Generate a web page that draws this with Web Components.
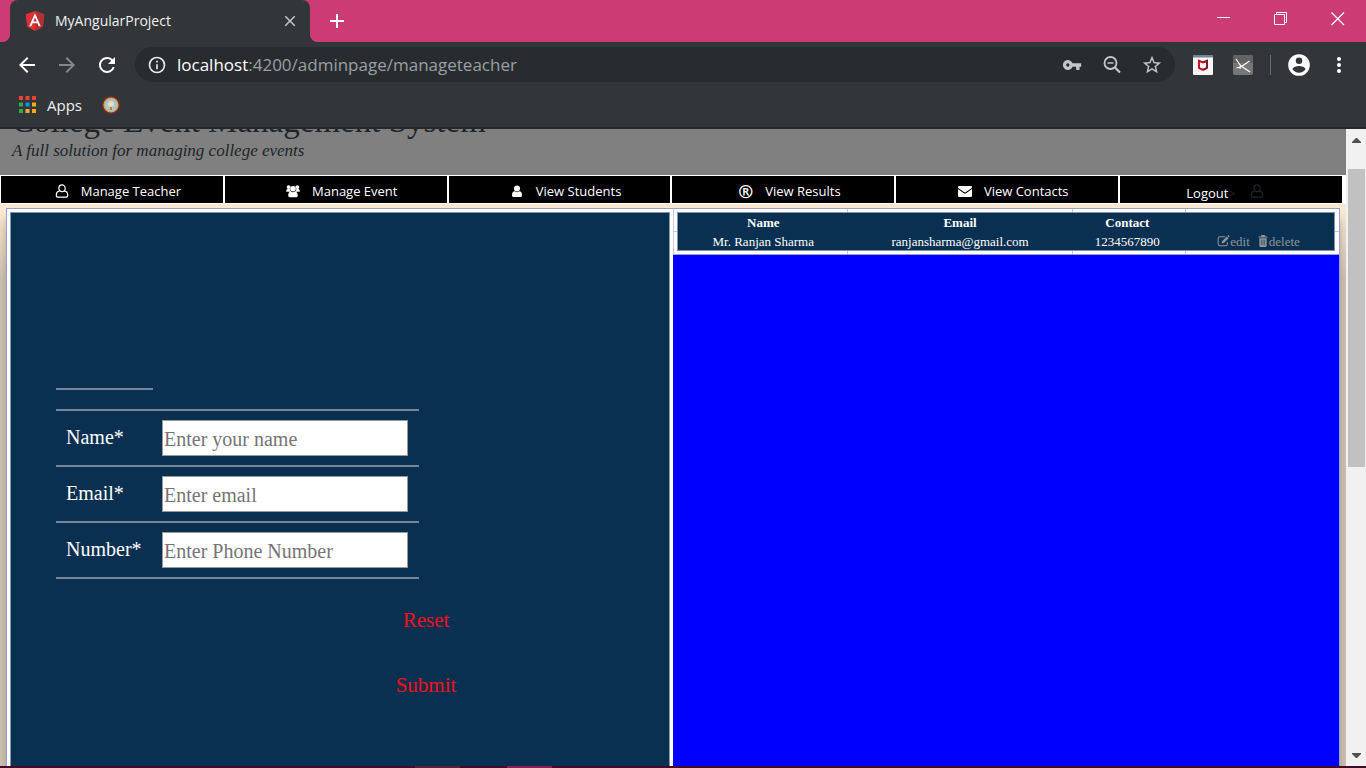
<!DOCTYPE html>
<html lang="en">
<head>
<meta charset="utf-8">
<title>MyAngularProject</title>
<style>
  html, body { height: 100%; margin: 0; }
  body { display: flex; flex-direction: column; overflow: hidden; font-family: "Open Sans", "Noto Sans", sans-serif; background: #323639; }
  main { flex: 1; min-height: 0; display: flex; }
</style>
</head>
<body>
<tab-strip>MyAngularProject</tab-strip>
<tool-bar><span slot="host">localhost</span><span slot="path">:4200/adminpage/manageteacher</span></tool-bar>
<bookmark-bar>Apps</bookmark-bar>
<main>
  <app-page>
    <site-header><span slot="title">College Event Management System</span><span slot="tagline">A full solution for managing college events</span></site-header>
    <site-nav>
      <nav-item icon="user-o">Manage Teacher</nav-item>
      <nav-item icon="users">Manage Event</nav-item>
      <nav-item icon="user">View Students</nav-item>
      <nav-item><span slot="mark">®</span>View Results</nav-item>
      <nav-item icon="envelope">View Contacts</nav-item>
      <logout-item>Logout</logout-item>
    </site-nav>
    <split-panels>
      <teacher-form slot="left">
        <form-field placeholder="Enter your name">Name*</form-field>
        <form-field placeholder="Enter email" type="email">Email*</form-field>
        <form-field placeholder="Enter Phone Number" type="tel">Number*</form-field>
      </teacher-form>
      <teacher-table slot="right"></teacher-table>
    </split-panels>
  </app-page>
  <page-scrollbar></page-scrollbar>
</main>
<task-edge></task-edge>

<script>
const define = (name, html, setup) => {
  const template = document.createElement('template');
  template.innerHTML = html;
  customElements.define(name, class extends HTMLElement {
    constructor() {
      super();
      this.attachShadow({ mode: 'open' }).append(template.content.cloneNode(true));
    }
    connectedCallback() { if (setup) setup(this, this.shadowRoot); }
  });
};

const icons = {
  angular: ['31 30 188 200', '<path fill="#dd3135" d="M125 30 31.9 63.2l14.2 123.1L125 230l78.9-43.7 14.2-123.1z"/><path fill="#b52e31" d="M125 30v200l78.9-43.7 14.2-123.1z"/><path fill="#fff" d="M125 52.1 66.8 182.6h21.7l11.7-29.2h49.4l11.7 29.2H183zm17 83.3h-34l17-40.9z"/>'],
  close: ['0 0 24 24', '<path d="M19 6.4 17.6 5 12 10.6 6.4 5 5 6.4l5.6 5.6L5 17.6 6.4 19l5.6-5.6 5.6 5.6 1.4-1.4-5.6-5.6z"/>'],
  plus: ['0 0 16 16', '<path d="M7 1h2v6h6v2H9v6H7V9H1V7h6z"/>'],
  minimize: ['0 0 14 14', '<path d="M0 5h13v1H0z"/>'],
  restore: ['0 0 14 14', '<path fill="none" stroke="currentColor" d="M.5 2.5h10v10H.5zM2.5 2.5v-2h10v10h-2"/>'],
  quit: ['0 0 14 14', '<path fill="none" stroke="currentColor" stroke-width="1.2" d="m.5.5 12.5 12.5M13 .5.5 13"/>'],
  back: ['0 0 24 24', '<path d="M20 11H7.8l5.6-5.6L12 4l-8 8 8 8 1.4-1.4L7.8 13H20z"/>'],
  forward: ['0 0 24 24', '<path d="m12 4-1.4 1.4 5.6 5.6H4v2h12.2l-5.6 5.6L12 20l8-8z"/>'],
  reload: ['0 0 24 24', '<path d="M17.65 6.35A8 8 0 1 0 19.73 14h-2.08A6 6 0 1 1 12 6c1.66 0 3.14.69 4.22 1.78L13 11h7V4z"/>'],
  info: ['0 0 24 24', '<path d="M11 7h2v2h-2zm0 4h2v6h-2zm1-9a10 10 0 1 0 0 20 10 10 0 0 0 0-20zm0 18a8 8 0 1 1 0-16 8 8 0 0 1 0 16z"/>'],
  key: ['0 0 24 24', '<path d="M12.65 10a6 6 0 1 0 0 4H17v4h4v-4h2v-4zM7 14a2 2 0 1 1 0-4 2 2 0 0 1 0 4z"/>'],
  zoomout: ['0 0 22 22', '<circle cx="9.500" cy="9" r="6" fill="none" stroke="currentColor" stroke-width="1.800"/><path fill="none" stroke="currentColor" stroke-width="2.200" d="m14 13.500 5 5"/><path d="M6.500 8.200h6v1.500h-6z"/>'],
  star: ['0 0 24 24', '<path d="m22 9.24-7.19-.62L12 2 9.19 8.63 2 9.24l5.46 4.73L5.82 21 12 17.27 18.18 21l-1.63-7.03zM12 15.4l-3.76 2.27 1-4.28-3.32-2.88 4.38-.38L12 6.1l1.71 4.04 4.38.38-3.32 2.88 1 4.28z"/>'],
  shield: ['0 0 20 20', '<rect width="20" height="20" rx="1" fill="#f7f7f7"/><path fill="#6f8793" d="M0 0h20v2.500H0z"/><path fill="none" stroke="#c8102e" stroke-width="2" d="M10 7.500 6 5.800v7l4 2.200"/><path fill="none" stroke="#8c1020" stroke-width="2" d="m10 7.500 4-1.700v7L10 15"/>'],
  script: ['0 0 20 20', '<rect width="20" height="20" rx="2" fill="#777"/><path fill="#636363" d="M0 2a2 2 0 0 1 2-2h16a2 2 0 0 1 2 2v6H0z"/><path fill="none" stroke="#fff" stroke-width="1.200" d="m3 4 4.500 6.500L17 17M3.500 13l5-1.500 8-5.500M7.500 11l-.5 3"/>'],
  account: ['0 0 24 24', '<path d="M12 2a10 10 0 1 0 0 20 10 10 0 0 0 0-20zm0 3a3 3 0 1 1 0 6 3 3 0 0 1 0-6zm0 14.200A7.200 7.200 0 0 1 6 16c0-2 4-3.100 6-3.100s6 1.100 6 3.100a7.200 7.200 0 0 1-6 3.200z"/>'],
  dots: ['0 0 24 24', '<circle cx="12" cy="6" r="2"/><circle cx="12" cy="12" r="2"/><circle cx="12" cy="18" r="2"/>'],
  apps: ['0 0 17 17', '<path fill="#ea4335" d="M0 0h4v4H0zM6.500 0h4v4h-4zM13 0h4v4h-4z"/><path fill="#34a853" d="M0 6.500h4v4H0zM0 13h4v4H0z"/><path fill="#1a88f0" d="M6.500 6.500h4v4h-4z"/><path fill="#fbab18" d="M13 6.500h4v4h-4zM6.500 13h4v4h-4zM13 13h4v4h-4z"/>'],
  badge: ['0 0 18 18', '<circle cx="9" cy="9" r="8.300" fill="#c9b050" stroke="#7d2c2c" stroke-width="1.400"/><circle cx="9" cy="9" r="6" fill="#a9c4e4"/><circle cx="9" cy="8" r="2.800" fill="#f5dfa0"/><path fill="#b97a50" d="M8 11h2v3H8z"/>'],
  'user-o': ['0 0 14 14', '<path fill="none" stroke="currentColor" stroke-width="1.200" d="M4.500 7.200C2 7.400 1.300 9 1.300 11.200c0 1.300.8 2 2 2h7.400c1.200 0 2-.7 2-2 0-2.200-.7-3.800-3.200-4M7 .8a3.200 3.400 0 1 1 0 6.800A3.200 3.400 0 0 1 7 .8z"/>'],
  users: ['0 0 16 14', '<circle cx="3" cy="2.500" r="2.200"/><circle cx="13" cy="2.500" r="2.200"/><circle cx="8" cy="4.500" r="3.200"/><path d="M.2 7.800c0-2 .6-3.100 1.500-3.100h2.600C4.400 6 4.800 7 5.500 7.800zM15.800 7.800c0-2-.6-3.100-1.500-3.100h-2.600c-.1 1.300-.5 2.300-1.200 3.100zM2.500 12.200C2.500 9 4 7.600 5.700 7.600c1.500 1 3.100 1 4.600 0 1.700 0 3.200 1.400 3.200 4.600 0 1-.6 1.800-1.600 1.800H4.100c-1 0-1.600-.8-1.600-1.800z"/>'],
  user: ['0 0 14 14', '<circle cx="7" cy="4.500" r="3"/><path d="M2 11.200c0-2.700 1-3.900 2.700-3.900 1.500 1.100 3.100 1.100 4.600 0C11 7.300 12 8.500 12 11.200c0 1-.6 1.800-1.600 1.800H3.600c-1 0-1.600-.8-1.600-1.800z"/>'],
  envelope: ['0 0 14 14', '<path d="M0 5v6.700C0 12.400.6 13 1.300 13h11.400c.7 0 1.300-.6 1.300-1.300V5L8.500 8.900c-1 .7-2 .7-3 0zM1.200 2C.4 2 0 2.500 0 3.200c0 .6.4 1 .9 1.300L6 8c.7.5 1.300.5 2 0l5.100-3.500c.5-.3.9-.7.9-1.300 0-.7-.5-1.200-1.200-1.200z"/>'],
  edit: ['0 0 14 14', '<path fill="none" stroke="currentColor" stroke-width="1.200" d="M9 2H3C1.500 2 .8 2.700.8 4v6.500c0 1.300.7 2 2.200 2h6.500c1.300 0 2-.7 2-2V8.500"/><path d="M5 7.500 10.800 1.700l2.200 2.200-5.800 5.800H5zM11.500 1l.8-.6c.3-.2.600-.2.900 0l.7.800c.3.300.3.600 0 .9l-.5.800z"/>'],
  trash: ['0 0 12 13', '<path d="M4.200 0h3.600l.7 1.600H11v1.200H1V1.600h2.500zM2 3.500h8v8c0 .9-.4 1.500-1 1.500H3c-.6 0-1-.6-1-1.500z"/><path stroke="#0a3150" stroke-width=".6" d="M4.200 5v6M6 5v6M7.800 5v6"/>'],
  up: ['0 0 9 5', '<path d="M4 0h1l4 4v1H0V4z"/>'],
  down: ['0 0 9 5', '<path d="M4 5h1l4-4V0H0v1z"/>']
};

define('ui-icon', `<style>
  :host { display: block; flex: none; width: 24px; height: 24px; }
  svg { display: block; width: 100%; height: 100%; fill: currentColor; }
</style><svg aria-hidden="true"></svg>`, (host, root) => {
  const [box, body] = icons[host.getAttribute('name')];
  const svg = root.querySelector('svg');
  svg.setAttribute('viewBox', box);
  svg.innerHTML = body;
});

define('tab-strip', `<style>
  :host { display: flex; height: 42px; padding-left: 10px; background: #cb3c74; color: #fff; }
  .tab { position: relative; display: flex; align-items: center; box-sizing: border-box; width: 300px; padding: 0 12px 1px 15px; border-radius: 8px 8px 0 0; background: #323639; font-size: 14px; }
  .tab::before, .tab::after { content: ""; position: absolute; bottom: 0; width: 8px; height: 8px; }
  .tab::before { right: 100%; background: radial-gradient(circle at 0 0, transparent 8px, #323639 8px); }
  .tab::after { left: 100%; background: radial-gradient(circle at 100% 0, transparent 8px, #323639 8px); }
  .tab > span { flex: 1; margin-left: 10px; color: #eef0f1; }
  .logo { width: 20px; height: 20px; }
  button { display: flex; align-items: center; justify-content: center; padding: 0; border: 0; background: none; color: inherit; }
  .x { width: 16px; height: 16px; color: #c5c8cb; }
  .x ui-icon { width: 18px; height: 18px; }
  .new { width: 54px; }
  .new ui-icon { width: 16px; height: 16px; }
  .window { display: flex; align-items: start; margin-left: auto; }
  .window button { width: 57px; height: 38px; }
  .window ui-icon { width: 14px; height: 14px; }
</style>
<div class="tab"><ui-icon class="logo" name="angular"></ui-icon><span><slot></slot></span><button class="x" aria-label="Close tab"><ui-icon name="close"></ui-icon></button></div>
<button class="new" aria-label="New tab"><ui-icon name="plus"></ui-icon></button>
<div class="window"><button aria-label="Minimize"><ui-icon name="minimize"></ui-icon></button><button aria-label="Restore"><ui-icon name="restore"></ui-icon></button><button aria-label="Close"><ui-icon name="quit"></ui-icon></button></div>`);

define('tool-bar', `<style>
  :host { display: flex; align-items: center; height: 45px; padding: 0 7px; background: #323639; color: #fff; }
  button { display: flex; flex: none; align-items: center; justify-content: center; width: 40px; height: 35px; padding: 0; border: 0; background: none; color: inherit; }
  .dim { color: #85888b; }
  .box { flex: 1; display: flex; align-items: center; height: 35px; margin: 0 8px; padding: 0 3px 0 12px; border-radius: 18px; background: #282c2f; color: #c4c7ca; }
  .info { width: 20px; height: 20px; color: #e8eaed; }
  .url { flex: 1; margin-left: 10px; font-size: 17px; line-height: 24px; white-space: nowrap; color: #9aa0a6; outline: 0; }
  .host { color: #fff; }
  .box button ui-icon { width: 20px; height: 20px; }
  .box button .wide { width: 22px; height: 22px; }
  .ext { width: 20px; height: 20px; }
  .rule { width: 1px; height: 20px; margin: 0 8px 0 7px; background: #6b6e71; }
  .me { width: 26px; height: 26px; }
</style>
<button aria-label="Back"><ui-icon name="back"></ui-icon></button><button class="dim" aria-label="Forward"><ui-icon name="forward"></ui-icon></button><button aria-label="Reload"><ui-icon name="reload"></ui-icon></button>
<div class="box"><ui-icon class="info" name="info"></ui-icon><div class="url" role="textbox" aria-label="Address" contenteditable="true" spellcheck="false"><span class="host"><slot name="host"></slot></span><slot name="path"></slot></div>
<button aria-label="Saved passwords"><ui-icon name="key"></ui-icon></button><button aria-label="Zoom"><ui-icon class="wide" name="zoomout"></ui-icon></button><button aria-label="Bookmark"><ui-icon class="wide" name="star"></ui-icon></button></div>
<button aria-label="Web safety"><ui-icon class="ext" name="shield"></ui-icon></button><button aria-label="Extension"><ui-icon class="ext" name="script"></ui-icon></button><div class="rule"></div>
<button aria-label="Profile"><ui-icon class="me" name="account"></ui-icon></button><button aria-label="Menu"><ui-icon name="dots"></ui-icon></button>`);

define('bookmark-bar', `<style>
  :host { display: flex; align-items: center; box-sizing: border-box; height: 42px; padding: 0 19px 5px; border-bottom: 2px solid #26292c; background: #323639; font-size: 15px; line-height: 20px; color: #eef0f1; }
  a { display: flex; align-items: center; gap: 11px; margin-right: 20px; color: inherit; text-decoration: none; }
  .apps { width: 17px; height: 17px; } .badge { width: 18px; height: 18px; }
</style><a href="#"><ui-icon class="apps" name="apps"></ui-icon><slot></slot></a><a href="#" aria-label="Bookmark"><ui-icon class="badge" name="badge"></ui-icon></a>`);

define('app-page', `<style>
  :host { flex: 1; min-width: 0; display: flex; flex-direction: column; background: linear-gradient(#fbe8d4, #fbe8d4 80px, #cfc2b1 150px); overflow: hidden; }
</style><slot></slot>`);

define('site-header', `<style>
  :host { display: flex; flex: none; flex-direction: column; justify-content: flex-end; box-sizing: border-box; height: 46px; padding: 0 12px 14px; overflow: hidden; background: #808080; color: #212529; font-family: "Liberation Serif", serif; }
  h1 { flex: none; margin: 0; font-size: 33px; line-height: 40px; font-weight: 400; white-space: nowrap; }
  p { flex: none; margin: 0; font-size: 17px; line-height: 20px; font-style: italic; }
</style><h1><slot name="title"></slot></h1><p><slot name="tagline"></slot></p>`);

define('site-nav', `<style>
  :host { flex: none; }
  nav { display: grid; grid-template-columns: repeat(6, minmax(0, 1fr)); gap: 2px; height: 27px; padding: 1px 4px 1px 1px; background: #fff; }
</style><nav><slot></slot></nav>`);

define('nav-item', `<style>
  :host { display: flex; background: #000; }
  a { flex: 1; display: flex; align-items: center; justify-content: center; gap: 12px; padding: 3px 0 0 12px; color: #fff; font-size: 13px; line-height: 20px; text-decoration: none; }
  ui-icon { width: 14px; height: 14px; }
  ::slotted([slot=mark]) { font-size: 18px; font-weight: 700; }
</style><a href="#"><slot name="mark"></slot><slot></slot></a>`, (host, root) => {
  const name = host.getAttribute('icon');
  if (!name) return;
  const icon = document.createElement('ui-icon');
  icon.setAttribute('name', name);
  root.querySelector('a').prepend(icon);
});

define('logout-item', `<style>
  :host { display: flex; align-items: center; justify-content: center; padding: 6px 12px 0 0; background: #000; color: #212529; font-size: 13px; line-height: 20px; }
  a { color: #fff; text-decoration: none; }
  ui-icon { width: 14px; height: 14px; margin: -4px 0 0 14px; }
</style><a href="#"><slot></slot></a><span>&gt;</span><ui-icon name="user-o"></ui-icon>`);

define('split-panels', `<style>
  :host { flex: 1; min-height: 0; display: grid; grid-template-columns: 1fr 1fr; margin: 4px 6px 0; border: 1px solid #9a9fd0; border-bottom: 0; box-shadow: 0 12px 8px rgba(80, 60, 40, .3); background: #00f; font-family: "Liberation Serif", serif; }
  .left { display: flex; padding: 3px 3px 0; background: #fff; }
</style><div class="left"><slot name="left"></slot></div><slot name="right"></slot>`);

define('teacher-form', `<style>
  :host { flex: 1; display: block; padding: 175px 0 0 45px; border: 1px solid #7f97a8; border-bottom: 0; background: #093050; color: #fff; }
  form { width: 363px; }
  .blank { width: 97px; height: 19px; border-top: 2px solid #748698; }
  .fields { border-bottom: 2px solid #748698; }
  .actions { display: flex; flex-direction: column; align-items: center; margin-left: 320px; width: 100px; padding-top: 9px; }
  button { width: 100px; height: 65px; padding: 0; border: 0; background: none; color: #fa0c18; font: 21px "Liberation Serif", serif; }
</style><form><div class="blank"></div><div class="fields"><slot></slot></div><div class="actions"><button type="reset">Reset</button><button type="button">Submit</button></div></form>`);

define('form-field', `<style>
  :host { display: flex; box-sizing: border-box; height: 56px; padding: 9px 11px 9px 10px; border-top: 2px solid #748698; }
  label { flex: 1; font-size: 20px; line-height: 34px; }
  input { box-sizing: border-box; width: 246px; height: 36px; padding: 2px 1px 0; border: 1px solid #999; border-radius: 0; background: #fff; font: 20px "Liberation Serif", serif; }
  input::placeholder { color: #757575; }
</style><label for="field"><slot></slot></label><input id="field">`, (host, root) => {
  const input = root.querySelector('input');
  input.placeholder = host.getAttribute('placeholder');
  input.type = host.getAttribute('type') || 'text';
});

define('teacher-table', `<style>
  :host { display: block; }
  .frame { padding: 3px 4px 3px 3px; border-bottom: 1px solid #9a9fd0; box-sizing: border-box; height: 46px; border-left: 1px solid #c5c9dd;
    background: linear-gradient(#c5c9dd, #c5c9dd) 26% 0 / 1px 100% no-repeat, linear-gradient(#c5c9dd, #c5c9dd) 60% 0 / 1px 100% no-repeat, linear-gradient(#c5c9dd, #c5c9dd) 77% 0 / 1px 100% no-repeat, linear-gradient(#c5c9dd, #c5c9dd) 0 50% / 100% 1px no-repeat, #fff; }
  table { width: 100%; height: 39px; table-layout: fixed; border-collapse: separate; border-spacing: 0; border: 1px solid #7f97a8; background: #093050; color: #fff; font-size: 13px; line-height: 17px; }
  th, td { padding: 1px 0 0; text-align: center; white-space: nowrap; }
  .name { width: 26%; } .mail { width: 34%; } .phone { width: 17%; }
  .acts { display: flex; justify-content: center; gap: 7px; }
  a { display: flex; align-items: center; color: #8e959b; text-decoration: none; }
  ui-icon { width: 13px; height: 12px; } .bin { width: 12px; }
</style><div class="frame"><table>
<colgroup><col class="name"><col class="mail"><col class="phone"><col></colgroup>
<thead><tr><th>Name</th><th>Email</th><th>Contact</th><td></td></tr></thead>
<tbody><tr><td>Mr. Ranjan Sharma</td><td>ranjansharma@gmail.com</td><td>1234567890</td><td><div class="acts"><a href="#"><ui-icon name="edit"></ui-icon>edit</a><a href="#"><ui-icon class="bin" name="trash"></ui-icon>delete</a></div></td></tr></tbody>
</table></div>`);

define('page-scrollbar', `<style>
  :host { flex: none; display: flex; flex-direction: column; width: 20px; box-sizing: border-box; padding: 9px 1px 8px 2px; background: #f1f1f1; color: #505050; }
  ui-icon { width: 9px; height: 5px; margin: 0 4px; }
  .track { flex: 1; padding: 26px 0 0; }
  .thumb { height: 51%; background: #c1c1c1; }
</style><ui-icon name="up"></ui-icon><div class="track"><div class="thumb"></div></div><ui-icon name="down"></ui-icon>`);

define('task-edge', `<style>
  :host { display: flex; flex: none; height: 2px; padding-left: 415px; gap: 47px; background: #430c25; }
  i { width: 45px; background: #5b2038; } i + i { background: #8a2050; }
</style><i></i><i></i>`);
</script>
</body>
</html>
